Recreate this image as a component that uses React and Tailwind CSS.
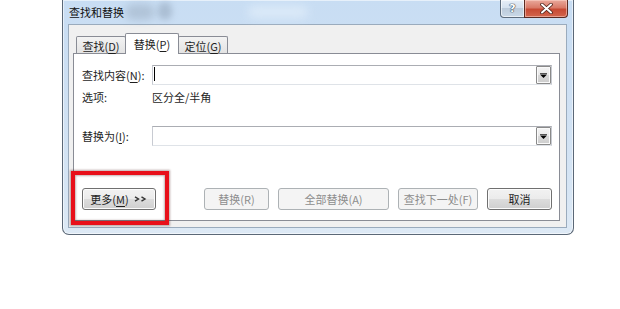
const U = ({ children }) => (
  <span className="underline underline-offset-[2px] decoration-[1px]">{children}</span>
);

function Btn({ children, disabled, w }) {
  return (
    <div
      className={`${w} h-[22px] flex items-center justify-center rounded-[3px] border ${
        disabled
          ? "border-[#adb2b5] bg-[#f4f4f4] text-[#8d8d8d]"
          : "border-[#707070] bg-[linear-gradient(#f2f2f2_0%,#ebebeb_50%,#dddddd_50%,#cfcfcf_100%)] shadow-[inset_0_0_0_1px_#fcfcfc] text-[#1e1e1e]"
      }`}
    >
      {children}
    </div>
  );
}

function Combo({ caret }) {
  return (
    <div className="w-[400px] h-[20px] flex bg-white border border-[#abadb3] border-l-[#c8cbd2] border-b-[#dfe3e8] border-r-[#c8cbd2]">
      <div className="flex-1 pl-[1px] pt-[1px]">
        {caret && <div className="w-px h-[14px] bg-black" />}
      </div>
      <div className="w-[15px] h-full flex items-center justify-center border border-[#8a8a8a] rounded-[1px] bg-[linear-gradient(#f4f4f4_0%,#e8e8e8_50%,#d9d9d9_50%,#cdcdcd_100%)] shadow-[inset_0_0_0_1px_#fafafa]">
        <svg width="7" height="5" viewBox="0 0 7 5">
          <rect x="0" y="0" width="7" height="1" fill="#555" />
          <polygon points="0,1.5 7,1.5 3.5,5" fill="#000" />
        </svg>
      </div>
    </div>
  );
}

export default function App() {
  return (
    <div className="relative w-[620px] h-[309px] bg-white overflow-hidden font-['Noto_Sans_CJK_SC',sans-serif] text-[11px] leading-none text-[#1e1e1e]">
      <div className="relative ml-[62px] w-[512px] h-[235px] flex flex-col border-x border-b border-[#5b6877] rounded-b-[7px] bg-[linear-gradient(180deg,#c8ddf3_0%,#cee0f3_40%,#d6e5f4_80%,#dde9f5_100%)] shadow-[inset_0_0_0_1px_rgba(255,255,255,0.55)]">
        {/* title bar */}
        <div className="relative h-[24px] flex items-center pl-[6px]">
          <div className="absolute left-[62px] top-[4px] w-[30px] h-[16px] rounded-full bg-[#8c9db0] opacity-40 blur-[4px]" />
          <div className="absolute left-[95px] top-[2px] w-[14px] h-[18px] rounded-full bg-[#7f91a6] opacity-40 blur-[3px]" />
          <div className="absolute left-[185px] top-[6px] w-[60px] h-[12px] rounded-full bg-[#e4f0fb] opacity-70 blur-[5px]" />
          <span className="relative pt-[1px] text-[#111]">查找和替换</span>
          <div className="relative ml-auto mr-[5px] self-start flex h-[18px]">
            <div className="w-[25px] h-full flex items-center justify-center border border-t-0 border-[#5c6b7c] rounded-bl-[4px] bg-[linear-gradient(#e6eef7_0%,#d3e0ee_50%,#bccbdb_50%,#c9d8e7_100%)] shadow-[inset_0_0_0_1px_rgba(255,255,255,0.6)]">
              <span className="font-['DejaVu_Sans',sans-serif] font-bold text-[11px] text-white [text-shadow:0_0_1px_#2d3c4e,0_0_1px_#2d3c4e,0_0_1px_#2d3c4e]">?</span>
            </div>
            <div className="-ml-px w-[44px] h-full flex items-center justify-center border border-t-0 border-[#5a2a22] rounded-br-[4px] bg-[linear-gradient(#e9a99c_0%,#d97a68_45%,#c74a34_55%,#d2654d_100%)] shadow-[inset_0_0_0_1px_rgba(255,220,210,0.5)]">
              <svg width="13" height="11" viewBox="0 0 13 11">
                <path d="M2 1.5 L11 9.5 M11 1.5 L2 9.5" stroke="#4a2018" strokeWidth="3.6" strokeLinecap="round" />
                <path d="M2 1.5 L11 9.5 M11 1.5 L2 9.5" stroke="#ffffff" strokeWidth="2" strokeLinecap="round" />
              </svg>
            </div>
          </div>
        </div>

        {/* client */}
        <div className="ml-[5px] mr-[6px] h-[204px] border border-[#9aabbd] bg-[#f0f0f0] flex flex-col pl-[4px] pr-[6px]">
          {/* tabs */}
          <div className="mt-[8px] h-[20px] flex items-end pl-[3px]">
            <div className="relative w-[50px] h-[17px] flex items-center justify-center pt-[2px] border-x border-t border-[#898c95] rounded-t-[2px] bg-[linear-gradient(#f3f3f3,#e3e3e3)]">
              查找(<U>D</U>)
            </div>
            <div className="relative z-10 -ml-px w-[54px] h-[21px] -mb-px flex items-center justify-center pt-[1px] border-x border-t border-[#898c95] rounded-t-[2px] bg-white">
              替换(<U>P</U>)
            </div>
            <div className="relative -ml-px w-[50px] h-[17px] flex items-center justify-center pt-[2px] border-x border-t border-[#898c95] rounded-t-[2px] bg-[linear-gradient(#f3f3f3,#e3e3e3)]">
              定位(<U>G</U>)
            </div>
          </div>

          {/* panel */}
          <div className="h-[168px] border border-[#898c95] bg-white flex flex-col">
            <div className="mt-[11px] h-[20px] flex items-center pl-[8px]">
              <div className="w-[70px]">
                查找内容(<U>N</U>):
              </div>
              <Combo caret />
            </div>
            <div className="mt-[4px] h-[16px] flex items-center pl-[8px]">
              <div className="w-[70px]">选项:</div>
              <div>区分全/半角</div>
            </div>
            <div className="mt-[21px] h-[20px] flex items-center pl-[8px]">
              <div className="w-[70px]">
                替换为(<U>I</U>):
              </div>
              <Combo />
            </div>
            <div className="mt-[42px] flex pl-[8px] pr-[7px]">
              <Btn w="w-[74px]">
                <span>
                  更多(<U>M</U>)
                </span>
                <svg className="ml-[5px]" width="14" height="6" viewBox="0 0 14 6">
                  <path d="M1 0.8 L4.5 3 L1 5.2" stroke="#333" strokeWidth="1.4" fill="none" />
                  <path d="M7.5 0.8 L11 3 L7.5 5.2" stroke="#333" strokeWidth="1.4" fill="none" />
                </svg>
              </Btn>
              <div className="ml-auto flex gap-[9px]">
                <Btn disabled w="w-[65px]">替换(R)</Btn>
                <Btn disabled w="w-[111px]">全部替换(A)</Btn>
                <Btn disabled w="w-[80px]">查找下一处(F)</Btn>
                <Btn w="w-[65px]">取消</Btn>
              </div>
            </div>
          </div>
        </div>
      </div>

      {/* red highlight */}
      <div className="absolute left-[71px] top-[171px] w-[98px] h-[54px] border-[4px] border-[#e8101a] shadow-[0_0_2px_1px_rgba(60,0,0,0.35),inset_0_0_2px_1px_rgba(60,0,0,0.3)]" />
    </div>
  );
}
